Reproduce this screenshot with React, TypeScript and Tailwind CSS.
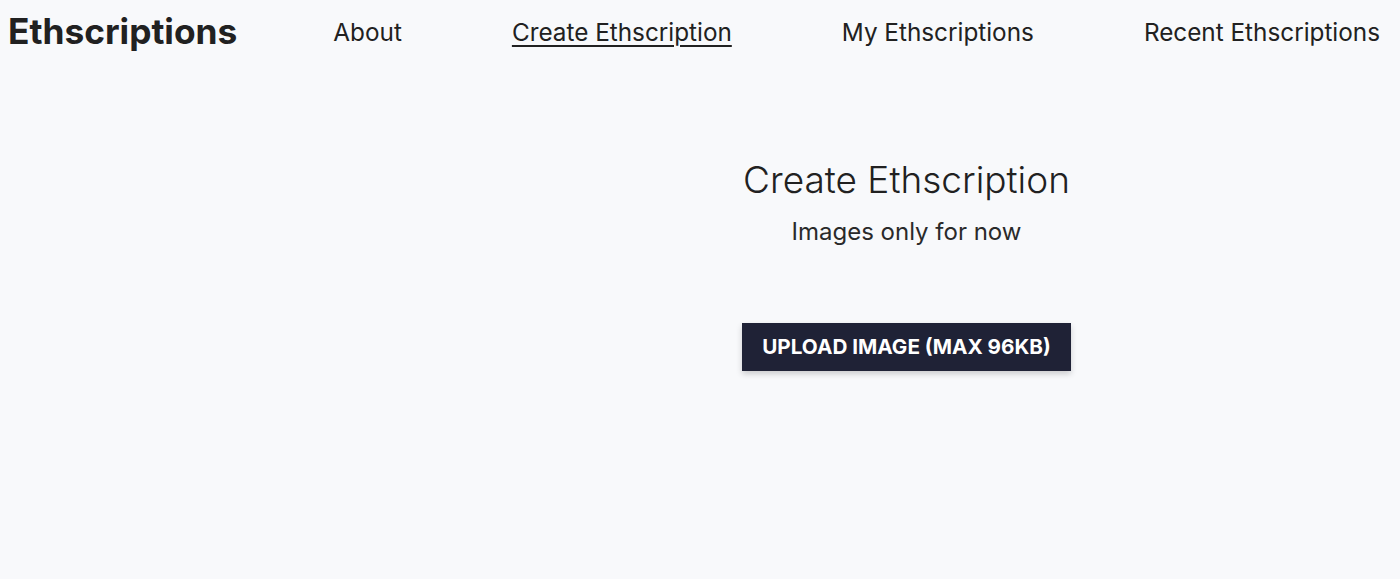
import React from "react";

export default function App() {
  return (
    <div
      className="min-h-[579px] w-full bg-[#f8f9fb] text-[#212121]"
      style={{ fontFamily: "Inter, 'Noto Sans', sans-serif" }}
    >
      <header className="flex h-[64px] items-center justify-between pl-2 pr-5">
        <div className="text-[35.3px] font-bold leading-none">Ethscriptions</div>
        <nav className="flex items-center gap-[110px] text-[24.3px] leading-none">
          <a className="cursor-pointer">About</a>
          <a className="cursor-pointer underline underline-offset-[4px] decoration-[1.5px]">Create Ethscription</a>
          <a className="cursor-pointer">My Ethscriptions</a>
          <a className="cursor-pointer">Recent Ethscriptions</a>
        </nav>
      </header>
      <main className="flex">
        <div className="w-[413px] shrink-0" />
        <div className="flex flex-1 flex-col items-center pt-[94px]">
          <h1 className="text-[37px] font-light leading-[44px]">Create Ethscription</h1>
          <p className="mt-[15px] text-[24px] font-normal leading-[30px] text-[#2a2a2a]">Images only for now</p>
          <button className="mt-[76px] h-[48px] bg-[#1f2236] px-5 text-[20.7px] font-bold uppercase text-white shadow-[0_3px_6px_rgba(0,0,0,0.18)]">
            Upload Image (max 96KB)
          </button>
        </div>
      </main>
    </div>
  );
}
